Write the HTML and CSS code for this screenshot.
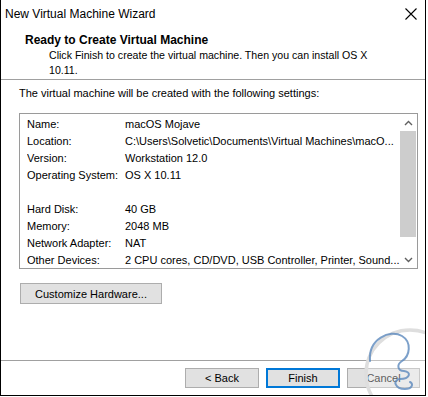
FILE: index.html
```html
<!DOCTYPE html>
<html lang="en">
<head>
  <meta charset="UTF-8" />
  <title>New Virtual Machine Wizard</title>
  <link rel="stylesheet" href="styles.css">
</head>
<body>
  <div class="window">
    <!-- barra de titulo -->
    <div class="titlebar">
      <span class="title">New Virtual Machine Wizard</span>
      <svg class="close" width="12" height="12" viewBox="0 0 12 12">
        <path d="M0.5 0.5 L11.5 11.5 M11.5 0.5 L0.5 11.5" stroke="#000" stroke-width="1.1" fill="none"/>
      </svg>
    </div>

    <!-- cabecera del paso -->
    <div class="header">
      <h3>Ready to Create Virtual Machine</h3>
      <p class="subtitle">Click Finish to create the virtual machine. Then you can install OS X<br>10.11.</p>
    </div>

    <div class="content">
      <p class="intro">The virtual machine will be created with the following settings:</p>

      <div class="listbox">
        <div class="rows">
          <div class="row"><span>Name:</span><span>macOS Mojave</span></div>
          <div class="row"><span>Location:</span><span>C:\Users\Solvetic\Documents\Virtual Machines\macO...</span></div>
          <div class="row"><span>Version:</span><span>Workstation 12.0</span></div>
          <div class="row"><span>Operating System:</span><span>OS X 10.11</span></div>
          <div class="row"><span></span><span></span></div>
          <div class="row"><span>Hard Disk:</span><span>40 GB</span></div>
          <div class="row"><span>Memory:</span><span>2048 MB</span></div>
          <div class="row"><span>Network Adapter:</span><span>NAT</span></div>
          <div class="row"><span>Other Devices:</span><span>2 CPU cores, CD/DVD, USB Controller, Printer, Sound...</span></div>
        </div>
        <div class="scrollbar">
          <div class="arrow">
            <svg width="9" height="6" viewBox="0 0 9 6"><path d="M1 5 L4.5 1.5 L8 5" stroke="#606060" stroke-width="1.4" fill="none"/></svg>
          </div>
          <div class="track"><div class="thumb"></div></div>
          <div class="arrow">
            <svg width="9" height="6" viewBox="0 0 9 6"><path d="M1 1 L4.5 4.5 L8 1" stroke="#606060" stroke-width="1.4" fill="none"/></svg>
          </div>
        </div>
      </div>

      <button class="btn customize">Customize Hardware...</button>
    </div>

    <!-- botones inferiores -->
    <div class="footer">
      <button class="btn">&lt; Back</button>
      <button class="btn default">Finish</button>
      <button class="btn cancel">Cancel</button>
    </div>

    <!-- marca de agua -->
    <svg class="watermark" width="100" height="100" viewBox="0 0 100 100">
      <circle cx="55" cy="50" r="44" fill="rgba(255,255,255,0.35)" stroke="#dedede" stroke-width="3.5"/>
      <path d="M15 37 C13 15 35 5 47 12 C57 18 55 32 47 37 C41 41 43 47 49 47 C57 48 55 55 45 55 C37 56 40 65 50 65 C57 65 59 60 55 58"
            stroke="#5b88bd" stroke-width="2" fill="none" stroke-linecap="round" opacity="0.8"/>
    </svg>
  </div>
</body>
</html>
```
FILE: styles.css
```css
* { box-sizing: border-box; }
body {
  margin: 0;
  background: #fff;
  font-family: 'Liberation Sans', Arial, sans-serif;
  font-size: 11px;
  color: #000;
}
.window {
  position: relative;
  width: 426px;
  height: 396px;
  border: 1px solid #000;
  border-top: none;
  display: flex;
  flex-direction: column;
  overflow: hidden;
}
/* Barra de titulo */
.titlebar {
  height: 27px;
  display: flex;
  align-items: center;
  justify-content: space-between;
  padding: 0 8px 0 4px;
}
.title {
  font-size: 12px;
}
/* Cabecera */
.header {
  height: 53px;
  border-bottom: 1px solid #a0a0a0;
  padding: 5px 0 0 24px;
}
.header h3 {
  margin: 0;
  font-size: 12px;
  font-weight: bold;
  line-height: 16px;
}
.subtitle {
  margin: 0;
  padding-left: 24px;
  line-height: 15px;
  font-size: 10.6px;
}
/* Contenido */
.content {
  flex: 1;
  padding: 5px 0 0 18px;
}
.intro {
  margin: 0;
  line-height: 16px;
}
.listbox {
  margin-top: 12px;
  width: 399px;
  height: 156px;
  border: 1px solid #9a9a9a;
  display: flex;
}
.rows {
  flex: 1;
  min-width: 0;
  padding: 2px 0 0 7px;
}
.row {
  display: grid;
  grid-template-columns: 98px 1fr;
  height: 17px;
  line-height: 17px;
  white-space: nowrap;
  overflow: hidden;
}
.scrollbar {
  width: 17px;
  flex-shrink: 0;
  display: flex;
  flex-direction: column;
}
.arrow {
  height: 17px;
  display: flex;
  align-items: center;
  justify-content: center;
}
.track {
  flex: 1;
  padding-right: 1px;
}
.thumb {
  height: 106px;
  background: #cdcdcd;
}
/* Botones */
.btn {
  font-family: inherit;
  font-size: 11px;
  color: #000;
  background: #e1e1e1;
  border: 1px solid #adadad;
  padding: 0;
  height: 20px;
  width: 74px;
  flex-shrink: 0;
}
.btn.cancel {
  width: 73px;
}
.btn.customize {
  display: block;
  margin: 14px 0 0 1px;
  width: 142px;
  height: 21px;
}
.btn.default {
  border: 2px solid #0078d7;
}
.footer {
  height: 35px;
  border-top: 1px solid #a0a0a0;
  display: flex;
  justify-content: flex-end;
  gap: 7px;
  padding: 7px 5px 0 0;
}
.watermark {
  position: absolute;
  left: 354px;
  top: 324px;
  pointer-events: none;
}
```
